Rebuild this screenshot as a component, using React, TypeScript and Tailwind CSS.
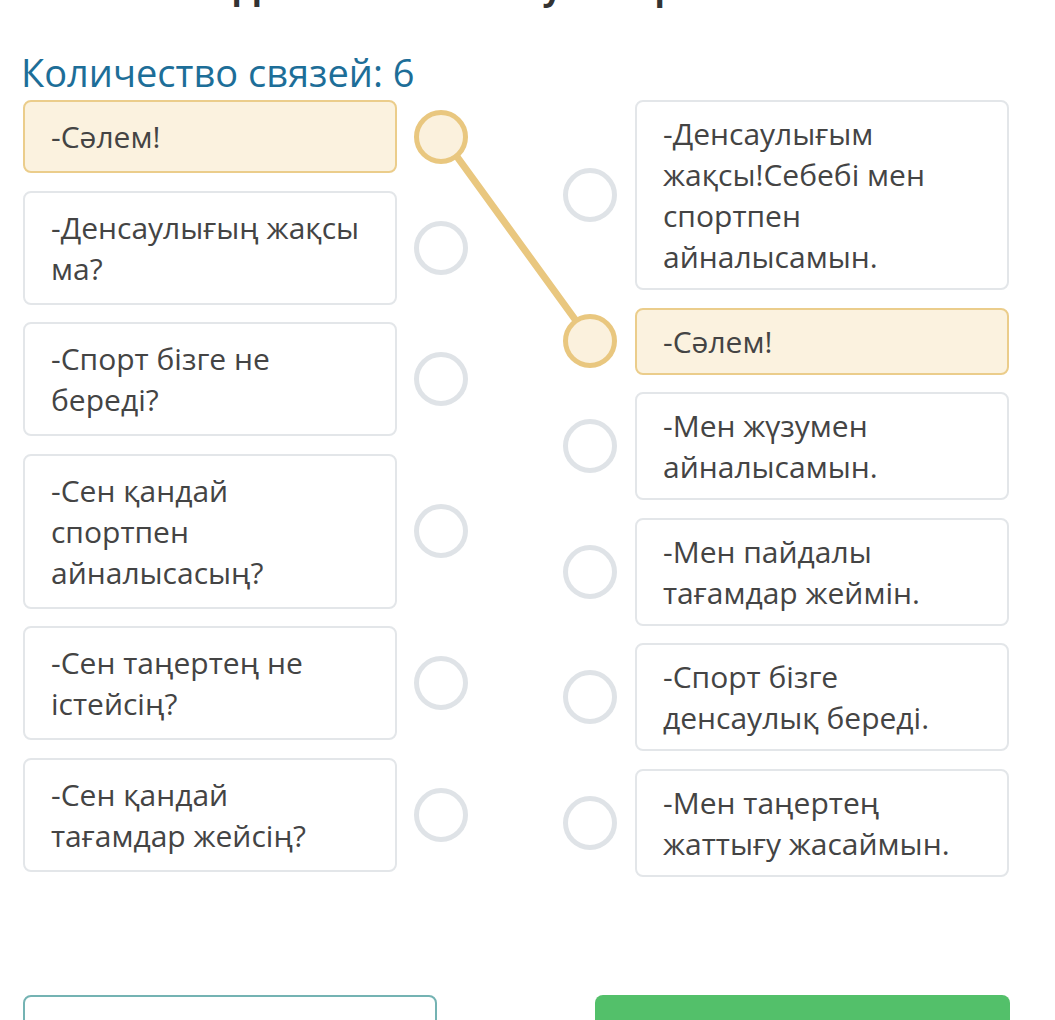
import React from 'react';

interface Item {
  text: React.ReactNode;
  active?: boolean;
}

const leftItems: Item[] = [
  { text: '-Сәлем!', active: true },
  { text: '-Денсаулығың жақсы ма?' },
  { text: '-Спорт бізге не береді?' },
  { text: '-Сен қандай спортпен айналысасың?' },
  { text: '-Сен таңертең не істейсің?' },
  { text: '-Сен қандай тағамдар жейсің?' },
];

const rightItems: Item[] = [
  {
    text: (
      <>
        -Денсаулығым <span className="whitespace-nowrap">жақсы!Себебі</span> мен спортпен айналысамын.
      </>
    ),
  },
  { text: '-Сәлем!', active: true },
  { text: '-Мен жүзумен айналысамын.' },
  { text: '-Мен пайдалы тағамдар жеймін.' },
  { text: '-Спорт бізге денсаулық береді.' },
  { text: '-Мен таңертең жаттығу жасаймын.' },
];

const Dot: React.FC<{ active?: boolean }> = ({ active }) => (
  <div
    className={`relative shrink-0 w-[54px] h-[54px] rounded-full border-[5px] ${
      active ? 'border-[#e9c77f] bg-[#fbf1dd]' : 'border-[#dfe3e7] bg-white'
    }`}
  />
);

const Card: React.FC<{ item: Item; side: 'left' | 'right' }> = ({ item, side }) => (
  <div
    className={`w-[374px] shrink-0 rounded-lg border-2 pl-[26px] pr-[32px] text-[30px] leading-[41px] text-[#444444] ${
      side === 'left' ? 'py-[14px]' : 'py-[11px]'
    } ${item.active ? 'border-[#ebcd8b] bg-[#fbf2df]' : 'border-[#e3e6e9] bg-white'}`}
  >
    {item.text}
  </div>
);

export default function App() {
  return (
    <div className="w-[1055px] h-[1020px] overflow-hidden bg-white font-['Open_Sans',sans-serif]">
      {/* task title, mostly scrolled off */}
      <div className="h-[10px] overflow-hidden flex items-end pl-[234px]">
        <p className="text-[34px] leading-[46px] font-bold text-[#333333] whitespace-nowrap">
          Диалог сөзіне жауап бер
        </p>
      </div>

      <h2 className="mt-[40px] pl-[21px] text-[38px] leading-[44px] text-[#1d6e98]">Количество связей: 6</h2>

      {/* matching board */}
      <div className="relative mt-[6px] flex pl-[23px]">
        <svg className="absolute left-0 top-0" width="1055" height="780">
          <line x1="442" y1="36" x2="590" y2="240" stroke="#e9c77f" strokeWidth="7" strokeLinecap="round" />
        </svg>

        <div className="flex flex-col gap-[17.6px]">
          {leftItems.map((item, i) => (
            <div key={i} className="flex items-center gap-[17px]">
              <Card item={item} side="left" />
              <Dot active={item.active} />
            </div>
          ))}
        </div>

        <div className="ml-[95px] flex flex-col gap-[17.6px]">
          {rightItems.map((item, i) => (
            <div key={i} className="flex items-center gap-[18px]">
              <Dot active={item.active} />
              <Card item={item} side="right" />
            </div>
          ))}
        </div>
      </div>

      {/* bottom buttons */}
      <div className="mt-[118px] flex justify-between pl-[23px] pr-[45px]">
        <button className="w-[414px] h-[60px] rounded-lg border-2 border-[#74b3b3] bg-white" />
        <button className="w-[415px] h-[60px] rounded-lg bg-[#53c06a]" />
      </div>
    </div>
  );
}
